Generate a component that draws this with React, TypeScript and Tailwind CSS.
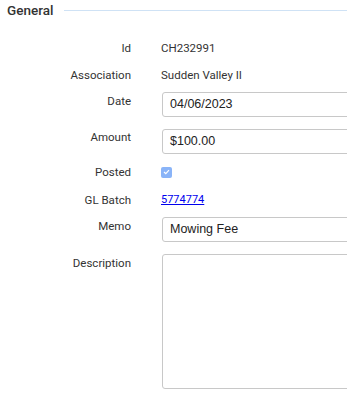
export default function App() {
  const label = 'w-[131px] shrink-0 text-right text-[11.5px] text-[#333] leading-[16px]';
  const value = 'text-[11.5px] text-[#333] leading-[16px]';
  const input =
    'h-[25px] w-[220px] shrink-0 rounded-[3px] border border-[#c8c8c8] bg-white px-[7px] text-[12.5px] text-[#222] font-["Liberation_Sans",Arial,sans-serif] flex items-center';

  return (
    <div className='w-[347px] h-[394px] overflow-hidden bg-white font-["Roboto","Noto_Sans",sans-serif]'>
      {/* Section header */}
      <div className="flex items-center gap-[11px] pl-[7px] pt-[2px] h-[18px]">
        <span className="text-[13.5px] font-medium text-[#333] leading-[16px]">General</span>
        <div className="flex-1 h-px bg-[#cfe2f5]" />
      </div>

      <div className="flex flex-col pt-[22px]">
        <div className="flex items-center h-[16px] gap-[30px]">
          <div className={label}>Id</div>
          <div className={value}>CH232991</div>
        </div>
        <div className="flex items-center h-[16px] gap-[30px] mt-[11px]">
          <div className={label}>Association</div>
          <div className={value}>Sudden Valley II</div>
        </div>
        <div className="flex items-start gap-[31px] mt-[9px]">
          <div className={`${label} pt-[1px]`}>Date</div>
          <div className={input}>04/06/2023</div>
        </div>
        <div className="flex items-start gap-[31px] mt-[12px]">
          <div className={label}>Amount</div>
          <div className={input}>$100.00</div>
        </div>
        <div className="flex items-center h-[16px] gap-[30px] mt-[10px]">
          <div className={label}>Posted</div>
          <div className="w-[11px] h-[11px] rounded-[2px] bg-[#8ab4f8] flex items-center justify-center">
            <svg width="7" height="6" viewBox="0 0 7 6" fill="none">
              <path d="M1 3 L2.8 4.7 L6 1.2" stroke="white" strokeWidth="1.2" />
            </svg>
          </div>
        </div>
        <div className="flex items-center h-[16px] gap-[30px] mt-[12px]">
          <div className={label}>GL Batch</div>
          <a href="#" className="text-[11px] text-[#0000ee] underline leading-[16px]">5774774</a>
        </div>
        <div className="flex items-start gap-[31px] mt-[9px]">
          <div className={`${label} pt-[1px]`}>Memo</div>
          <div className={input}>Mowing Fee</div>
        </div>
        <div className="flex items-start gap-[31px] mt-[12px]">
          <div className={`${label} pt-[1px]`}>Description</div>
          <div className="h-[135px] w-[220px] shrink-0 rounded-[3px] border border-[#c8c8c8] bg-white" />
        </div>
      </div>
    </div>
  );
}
